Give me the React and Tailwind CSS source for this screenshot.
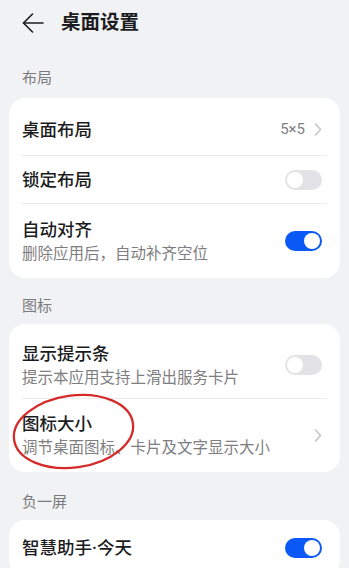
import React from 'react';

const font = { fontFamily: 'Roboto, "Noto Sans CJK SC", "Noto Sans", sans-serif' };

function Toggle({ on }) {
  return (
    <div
      className={`relative w-[37px] h-[20px] rounded-full shrink-0 ${on ? 'bg-[#0a59f7]' : 'bg-[#e3e3e5]'}`}
    >
      <div
        className={`absolute top-[2px] w-[16px] h-[16px] rounded-full bg-white ${on ? 'right-[2px]' : 'left-[2px]'}`}
      ></div>
    </div>
  );
}

function Chevron() {
  return (
    <svg width="8" height="13" viewBox="0 0 8 13" className="shrink-0">
      <polyline points="1.5,1 6.5,6.5 1.5,12" fill="none" stroke="#c2c2c4" strokeWidth="1.4" strokeLinecap="round" strokeLinejoin="round" />
    </svg>
  );
}

function Divider() {
  return <div className="mx-[13px] h-px bg-[#ebebed]"></div>;
}

function Row({ title, sub, right, className }) {
  return (
    <div className={`flex items-center justify-between pl-[13px] pr-[18px] ${className}`}>
      <div className="flex flex-col">
        <span className="text-[17.5px] leading-[24px] font-medium text-[#1c1c1e]">{title}</span>
        {sub && <span className="text-[15.5px] leading-[22px] text-[#7e7e80] mt-[1px]">{sub}</span>}
      </div>
      {right}
    </div>
  );
}

function Label({ text, className }) {
  return (
    <div className={`pl-[22px] text-[15px] leading-[20px] text-[#7b7b7d] ${className}`}>{text}</div>
  );
}

export default function App() {
  return (
    <div className="relative w-[349px] h-[568px] overflow-hidden bg-[#f1f2f4]" style={font}>
      {/* Header */}
      <div className="flex items-center h-[46px] pl-[22px]">
        <svg width="22" height="20" viewBox="0 0 22 20">
          <line x1="1.5" y1="10" x2="21" y2="10" stroke="#1c1c1e" strokeWidth="1.6" strokeLinecap="round" />
          <polyline points="10.5,1 1.5,10 10.5,19" fill="none" stroke="#1c1c1e" strokeWidth="1.6" strokeLinecap="round" strokeLinejoin="round" />
        </svg>
        <span className="ml-[17px] text-[19.5px] font-semibold text-[#1c1c1e] leading-[26px]">桌面设置</span>
      </div>

      <Label text="布局" className="pt-[22px] pb-[10px]" />
      <div className="mx-[9px] bg-white rounded-[16px]">
        <Row title="桌面布局" className="h-[57px] pt-[6px]" right={
          <div className="flex items-center gap-[9px]">
            <span className="text-[15px] text-[#808082]">5×5</span>
            <Chevron />
          </div>
        } />
        <Divider />
        <Row title="锁定布局" className="h-[47px]" right={<Toggle on={false} />} />
        <Divider />
        <Row title="自动对齐" sub="删除应用后，自动补齐空位" className="h-[74px]" right={<Toggle on />} />
      </div>

      <Label text="图标" className="pt-[18px] pb-[8px]" />
      <div className="mx-[9px] bg-white rounded-[16px]">
        <Row title="显示提示条" sub="提示本应用支持上滑出服务卡片" className="h-[74px] pt-[8px]" right={<Toggle on={false} />} />
        <Divider />
        <Row title="图标大小" sub="调节桌面图标、卡片及文字显示大小" className="h-[73px]" right={<Chevron />} />
      </div>

      <Label text="负一屏" className="pt-[20px] pb-[8px]" />
      <div className="mx-[9px] bg-white rounded-[16px]">
        <Row title="智慧助手·今天" className="h-[56px]" right={<Toggle on />} />
      </div>

      {/* red hand-drawn annotation */}
      <svg className="absolute left-0 top-0 pointer-events-none" width="349" height="568">
        <ellipse cx="73.5" cy="431.5" rx="60" ry="36" fill="none" stroke="#d42a2a" strokeWidth="2.3" transform="rotate(-8 73.5 431.5)" />
      </svg>
    </div>
  );
}
